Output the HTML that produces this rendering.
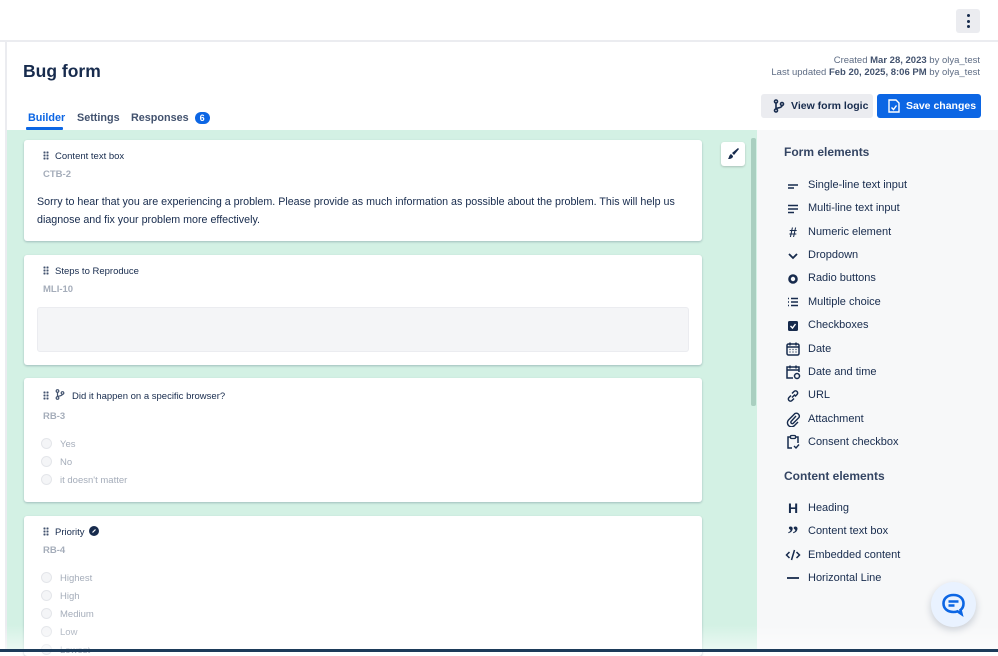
<!DOCTYPE html>
<html><head><style>
*{box-sizing:border-box;margin:0;padding:0}
body{width:998px;height:652px;overflow:hidden;background:#fff;font-family:"Liberation Sans",sans-serif;color:#172b4d;position:relative}
.top{position:absolute;left:0;top:0;width:998px;height:42px;background:#fff;border-bottom:2px solid #ebecf0}
.kebab{position:absolute;left:956px;top:9px;width:24px;height:24px;background:#ebecf0;border-radius:3px}
.kebab i{position:absolute;left:10.5px;width:3px;height:3px;border-radius:50%;background:#172b4d}
.lb{position:absolute;left:5px;top:42px;width:2px;height:610px;background:#ebecf0}
h1{position:absolute;left:23px;top:61px;font-size:17.5px;font-weight:bold;color:#172b4d}
.meta{position:absolute;right:18px;top:55px;text-align:right;font-size:9.5px;color:#5e6c84;line-height:12px}
.meta b{color:#42526e}
.tabs{position:absolute;left:28px;top:112px;font-size:10.8px;font-weight:bold;color:#42526e}
.tabs span{position:absolute;white-space:nowrap}
.badge{display:inline-block;background:#0c66e4;color:#fff;border-radius:8px;font-size:9px;width:15px;height:12px;text-align:center;line-height:12px;vertical-align:2px;margin-left:6px}
.ul{position:absolute;left:26px;top:127px;width:37px;height:3px;background:#0c66e4;border-radius:1px}
.btn{position:absolute;top:94px;height:24px;border-radius:3px;font-size:10.5px;font-weight:bold;line-height:24px;white-space:nowrap;overflow:hidden}
.green{position:absolute;left:7px;top:130px;width:750px;height:522px;background:#d3f1e4}
.sb{position:absolute;left:751px;top:138px;width:5px;height:268px;background:#a9cfc0;border-radius:2px}
.brush{position:absolute;left:721px;top:142px;width:24px;height:24px;background:#fff;border-radius:3px;box-shadow:0 1px 2px rgba(0,0,0,.2)}
.card{position:absolute;left:24px;width:678px;background:#fff;border-radius:3px;box-shadow:0 1px 2px rgba(9,30,66,.25)}
.lbl{position:absolute;left:19px;font-size:9.5px;color:#172b4d}
.dots{display:inline-block;width:6px;height:9px;margin-right:6px;vertical-align:-1px;background:radial-gradient(circle,#42526e 1px,transparent 1.2px) 0 0/3px 3px}
.code{position:absolute;left:19px;font-size:9.5px;font-weight:bold;color:#a5adba}
.opt{position:absolute;left:17px;font-size:9.5px;color:#a5adba}
.opt i{display:inline-block;width:11px;height:11px;border-radius:50%;border:1px solid #e4e6ea;background:#f4f5f7;vertical-align:-2px;margin-right:8px}
.side{position:absolute;left:757px;top:130px;width:241px;height:522px;background:#f7f8f9}
.sh{position:absolute;left:784px;font-size:12px;font-weight:bold;color:#344563}
.it{position:absolute;left:808px;font-size:11px;color:#172b4d}
.ic{position:absolute;left:785px;width:16px;height:16px}
.fab{position:absolute;left:931px;top:582px;width:45px;height:45px;border-radius:50%;background:#e9f2ff;box-shadow:0 3px 8px rgba(9,30,66,.2)}
.fade{position:absolute;left:0;top:625px;width:998px;height:27px;background:linear-gradient(rgba(255,255,255,0),rgba(255,255,255,.6))}
.bot{position:absolute;left:0;top:649px;width:998px;height:3px;background:#1d3b5a}
</style></head><body>
<div class="top"><div class="kebab"><i style="top:5px"></i><i style="top:10.5px"></i><i style="top:16px"></i></div></div>
<div class="lb"></div>
<h1>Bug form</h1>
<div class="meta">Created <b>Mar 28, 2023</b> by olya_test<br>Last updated <b>Feb 20, 2025, 8:06 PM</b> by olya_test</div>
<div class="tabs"><span style="left:0;color:#0c66e4">Builder</span><span style="left:49px">Settings</span><span style="left:103px">Responses<span class="badge">6</span></span></div>
<div class="ul"></div>
<div class="btn" style="left:761px;width:112px;background:#ebecf0;color:#172b4d;padding-left:30px">
<svg style="position:absolute;left:11px;top:5px" width="14" height="14" viewBox="0 0 14 14" fill="none" stroke="#172b4d" stroke-width="1.6"><circle cx="4" cy="2.5" r="1.5"/><circle cx="4" cy="11.5" r="1.5"/><circle cx="10" cy="5" r="1.5"/><path d="M4 4v6M10 6.5c0 3-6 2-6 3.5"/></svg>View form logic</div>
<div class="btn" style="left:877px;width:104px;background:#0c66e4;color:#fff;padding-left:29px">
<svg style="position:absolute;left:11px;top:5px" width="12" height="14" viewBox="0 0 12 14" fill="none" stroke="#fff" stroke-width="1.4"><path d="M1 1h7l3 3v9H1z"/><path d="M3.5 8.5l2 2 3-4"/></svg>Save changes</div>
<div class="green"></div>
<div class="sb"></div>
<div class="brush"><svg width="24" height="24" viewBox="0 0 24 24"><path d="M17 6l1 1-5 6-2-2z" fill="#172b4d"/><path d="M10 12l2 2c0 2-2 3-5 3 1-1 1-4 3-5z" fill="#172b4d"/></svg></div>

<div class="card" style="top:140px;height:101px">
<div class="lbl" style="top:11px"><span class="dots"></span>Content text box</div>
<div class="code" style="top:29px">CTB-2</div>
<div style="position:absolute;left:13px;top:53px;font-size:10.7px;line-height:18px;color:#172b4d;width:660px">Sorry to hear that you are experiencing a problem. Please provide as much information as possible about the problem. This will help us diagnose and fix your problem more effectively.</div>
</div>
<div class="card" style="top:255px;height:110px">
<div class="lbl" style="top:11px"><span class="dots"></span>Steps to Reproduce</div>
<div class="code" style="top:29px">MLI-10</div>
<div style="position:absolute;left:13px;top:52px;width:652px;height:45px;background:#f4f5f7;border:1px solid #ebecf0;border-radius:3px"></div>
</div>
<div class="card" style="top:378px;height:124px">
<div class="lbl" style="top:11px"><span class="dots"></span><svg width="10" height="11" viewBox="0 0 10 11" fill="none" stroke="#42526e" stroke-width="1.2" style="vertical-align:-1px;margin-right:7px"><circle cx="2.5" cy="2" r="1.3"/><circle cx="2.5" cy="9" r="1.3"/><circle cx="7.5" cy="4" r="1.3"/><path d="M2.5 3.3v4.4M7.5 5.3c0 2-5 1.5-5 2.4"/></svg>Did it happen on a specific browser?</div>
<div class="code" style="top:33px">RB-3</div>
<div class="opt" style="top:60px"><i></i>Yes</div>
<div class="opt" style="top:78px"><i></i>No</div>
<div class="opt" style="top:96px"><i></i>it doesn't matter</div>
</div>
<div class="card" style="top:516px;height:140px">
<div class="lbl" style="top:10px"><span class="dots"></span>Priority <svg width="10" height="10" viewBox="0 0 10 10" style="vertical-align:-1px;margin-left:2px"><circle cx="5" cy="5" r="5" fill="#172b4d"/><path d="M3.5 6.5l3-3" stroke="#fff" stroke-width="1.2"/></svg></div>
<div class="code" style="top:29px">RB-4</div>
<div class="opt" style="top:56px"><i></i>Highest</div>
<div class="opt" style="top:74px"><i></i>High</div>
<div class="opt" style="top:92px"><i></i>Medium</div>
<div class="opt" style="top:110px"><i></i>Low</div>
<div class="opt" style="top:128px"><i></i>Lowest</div>
</div>

<div class="side"></div>
<div class="sh" style="top:145px">Form elements</div>
<div class="sh" style="top:469px">Content elements</div>

<svg class="ic" style="top:178px" viewBox="0 0 16 16"><path d="M3 7h10M3 10h6" stroke="#172b4d" stroke-width="1.6"/></svg>
<div class="it" style="top:179px">Single-line text input</div>
<svg class="ic" style="top:201px" viewBox="0 0 16 16"><path d="M3 4.5h10M3 8h10M3 11.5h6" stroke="#172b4d" stroke-width="1.6"/></svg>
<div class="it" style="top:202px">Multi-line text input</div>
<div class="ic" style="top:224px;font-size:14px;font-weight:bold;text-align:center;line-height:16px">#</div>
<div class="it" style="top:226px">Numeric element</div>
<svg class="ic" style="top:248px" viewBox="0 0 16 16"><path d="M4 6l4 4 4-4" fill="none" stroke="#172b4d" stroke-width="1.8"/></svg>
<div class="it" style="top:249px">Dropdown</div>
<svg class="ic" style="top:271px" viewBox="0 0 16 16"><circle cx="8" cy="8" r="3.5" fill="none" stroke="#172b4d" stroke-width="2.6"/></svg>
<div class="it" style="top:272px">Radio buttons</div>
<svg class="ic" style="top:294px" viewBox="0 0 16 16"><path d="M6 4.5h7M6 8h7M6 11.5h7M3 4.5h1M3 8h1M3 11.5h1" stroke="#172b4d" stroke-width="1.4"/></svg>
<div class="it" style="top:296px">Multiple choice</div>
<svg class="ic" style="top:318px" viewBox="0 0 16 16"><rect x="3" y="3" width="10" height="10" rx="1.5" fill="#172b4d"/><path d="M5.5 8l2 2 3-4" fill="none" stroke="#fff" stroke-width="1.4"/></svg>
<div class="it" style="top:319px">Checkboxes</div>
<svg class="ic" style="top:341px" viewBox="0 0 16 16"><rect x="2" y="3" width="12" height="11" rx="1.5" fill="none" stroke="#172b4d" stroke-width="1.5"/><path d="M2 6h12M5 1.5v3M11 1.5v3" stroke="#172b4d" stroke-width="1.5"/><path d="M4.5 8.5h1M7.5 8.5h1M10.5 8.5h1M4.5 11h1M7.5 11h1M10.5 11h1" stroke="#172b4d" stroke-width="1.2"/></svg>
<div class="it" style="top:343px">Date</div>
<svg class="ic" style="top:364px" viewBox="0 0 16 16"><path d="M8 14H2V3h12v5M2 6h12M5 1.5v3M11 1.5v3" fill="none" stroke="#172b4d" stroke-width="1.5"/><circle cx="12" cy="12" r="2.5" fill="none" stroke="#172b4d" stroke-width="1.5"/></svg>
<div class="it" style="top:366px">Date and time</div>
<svg class="ic" style="top:388px" viewBox="0 0 16 16"><path d="M7 9.5l3-3M6 7.5l-2 2a2.1 2.1 0 003 3l2-2M10 8.5l2-2a2.1 2.1 0 00-3-3l-2 2" fill="none" stroke="#172b4d" stroke-width="1.5"/></svg>
<div class="it" style="top:389px">URL</div>
<svg class="ic" style="top:411px" viewBox="0 0 16 16"><path d="M11 5l-5 5.5a1.5 1.5 0 002 2l6-6a3 3 0 00-4-4L3.5 9a4 4 0 006 5.5L13 11" fill="none" stroke="#172b4d" stroke-width="1.4"/></svg>
<div class="it" style="top:413px">Attachment</div>
<svg class="ic" style="top:434px" viewBox="0 0 16 16"><path d="M7 14H3V3h2M11 3h2v6" fill="none" stroke="#172b4d" stroke-width="1.5"/><rect x="5.5" y="1.5" width="5" height="3" rx="1" fill="none" stroke="#172b4d" stroke-width="1.3"/><path d="M9 12l2 2 3-3.5" fill="none" stroke="#172b4d" stroke-width="1.4"/></svg>
<div class="it" style="top:436px">Consent checkbox</div>

<div class="ic" style="top:500px;font-size:14px;font-weight:bold;text-align:center;line-height:16px">H</div>
<div class="it" style="top:502px">Heading</div>
<div class="ic" style="top:522px;font-size:22px;font-weight:bold;text-align:center;line-height:24px;font-family:'Liberation Serif',serif">&#8221;</div>
<div class="it" style="top:525px">Content text box</div>
<svg class="ic" style="top:547px" viewBox="0 0 16 16"><path d="M4.5 5L1.5 8l3 3M11.5 5l3 3-3 3M9.5 3l-3 10" fill="none" stroke="#172b4d" stroke-width="1.5"/></svg>
<div class="it" style="top:549px">Embedded content</div>
<svg class="ic" style="top:570px" viewBox="0 0 16 16"><path d="M2 8h12" stroke="#172b4d" stroke-width="1.8"/></svg>
<div class="it" style="top:572px">Horizontal Line</div>

<div class="fab"><svg width="45" height="45" viewBox="0 0 45 45"><path d="M22.5 13c-6 0-10 3.5-10 8.5s4 8.5 10 8.5c1.5 0 3-.3 4-.7l4 2.7-1-4c2-1.5 3-3.5 3-6.5 0-5-4-8.5-10-8.5z" fill="none" stroke="#0c66e4" stroke-width="2.6"/><path d="M17.5 19.5h10M17.5 23.5h6" stroke="#0c66e4" stroke-width="2.4"/></svg></div>
<div class="fade"></div>
<div class="bot"></div>
</body></html>
